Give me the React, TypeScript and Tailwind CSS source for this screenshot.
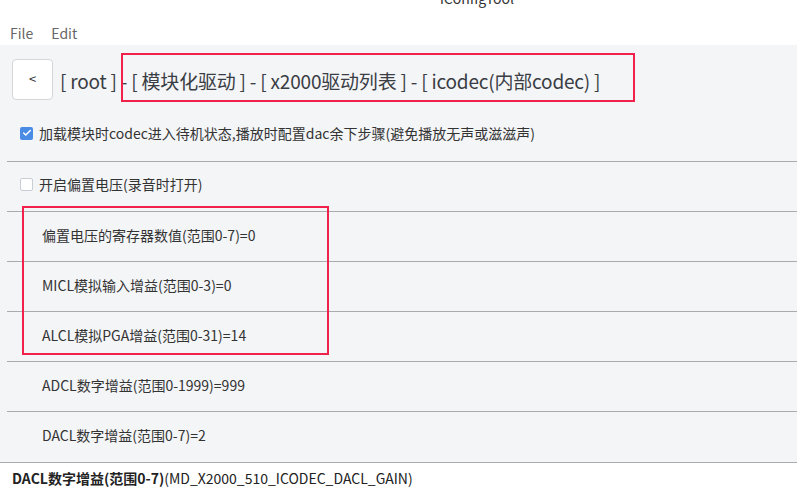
import { Check } from "lucide-react";

const FONT = { fontFamily: '"Noto Sans CJK SC", "Noto Sans", sans-serif' };

interface OptionRowProps {
  label: string;
  checked: boolean;
  className?: string;
}

function OptionRow({ label, checked, className }: OptionRowProps) {
  return (
    <div className={`flex items-center gap-[6px] border-b border-[#a9abae] pl-[13px] ml-[7px] ${className ?? ""}`}>
      {checked ? (
        <span className="flex items-center justify-center size-[13px] rounded-[2px] bg-[#4a8be6]">
          <Check size={10} strokeWidth={3.5} className="text-white" />
        </span>
      ) : (
        <span className="size-[13px] rounded-[2px] border border-[#c9cdd6] bg-white" />
      )}
      <span className="text-[14px] text-[#333]">{label}</span>
    </div>
  );
}

function ValueRow({ label, last }: { label: string; last?: boolean }) {
  return (
    <div
      className={`flex items-center h-[50px] ml-[7px] pl-[35px] pb-[2px] ${
        last ? "" : "border-b border-[#a9abae]"
      }`}
    >
      <span className="text-[14px] text-[#333]">{label}</span>
    </div>
  );
}

export default function App() {
  const values = [
    "偏置电压的寄存器数值(范围0-7)=0",
    "MICL模拟输入增益(范围0-3)=0",
    "ALCL模拟PGA增益(范围0-31)=14",
    "ADCL数字增益(范围0-1999)=999",
    "DACL数字增益(范围0-7)=2",
  ];

  return (
    <div className="w-[797px] h-[495px] overflow-hidden bg-white flex flex-col" style={FONT}>
      {/* window title, cut off by the top edge */}
      <div className="h-[9px] overflow-hidden pl-[440px]">
        <div className="-mt-[12px] text-[14px] text-[#333] leading-[20px]">iConfigTool</div>
      </div>

      {/* menu bar */}
      <div className="flex items-center h-[38px] pl-[10px] pt-[14px] gap-[18px] text-[14px] text-[#666]">
        <span>File</span>
        <span>Edit</span>
      </div>

      <div className="relative flex-1 flex flex-col bg-[#f4f5f7]">
        {/* breadcrumb */}
        <div className="flex items-center gap-[7px] pl-[12px] pt-[14px] pb-[4px]">
          <button className="flex items-center justify-center size-[41px] rounded-[4px] border border-[#d4d6da] bg-white text-[13px] text-[#333]">
            &lt;
          </button>
          <span className="text-[19px] tracking-[-0.2px] pt-[4px] text-[#3a3d44] whitespace-nowrap">
            [ root ] - [ 模块化驱动 ] - [ x2000驱动列表 ] - [ icodec(内部codec) ]
          </span>
        </div>

        <OptionRow
          checked
          className="h-[58px] pt-[2px]"
          label="加载模块时codec进入待机状态,播放时配置dac余下步骤(避免播放无声或滋滋声)"
        />
        <OptionRow checked={false} className="h-[50px] pb-[3px]" label="开启偏置电压(录音时打开)" />

        {values.map((v, i) => (
          <ValueRow key={v} label={v} last={i === values.length - 1} />
        ))}

        {/* highlight boxes */}
        <div className="absolute left-[121px] top-[8px] w-[514px] h-[49px] border-2 border-[#f0224c]" />
        <div className="absolute left-[22px] top-[161px] w-[307px] h-[149px] border-2 border-[#f0224c]" />
      </div>

      {/* status bar */}
      <div className="flex items-center h-[36px] border-t border-[#a9adb3] pl-[12px] text-[14px] text-[#222]">
        <span className="font-bold">DACL数字增益(范围0-7)</span>
        <span>(MD_X2000_510_ICODEC_DACL_GAIN)</span>
      </div>
    </div>
  );
}
